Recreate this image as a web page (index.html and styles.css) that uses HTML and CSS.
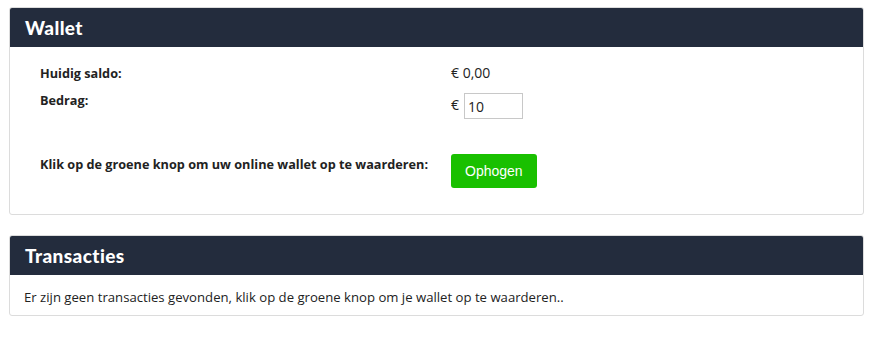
FILE: index.html
```html
<!DOCTYPE html>
<html lang="nl">
<head>
  <meta charset="UTF-8" />
  <title>Wallet</title>
  <link rel="stylesheet" href="styles.css">
</head>
<body>
  <section class="panel">
    <div class="panel-heading">
      <h2>Wallet</h2>
    </div>
    <div class="panel-body wallet">
      <div class="row">
        <div class="label">Huidig saldo:</div>
        <div class="value">&euro; 0,00</div>
      </div>
      <div class="row">
        <div class="label">Bedrag:</div>
        <div class="value">&euro; <input type="text" value="10"></div>
      </div>
      <div class="row row-button">
        <div class="label">Klik op de groene knop om uw online wallet op te waarderen:</div>
        <div class="value"><button class="btn-green">Ophogen</button></div>
      </div>
    </div>
  </section>

  <section class="panel">
    <div class="panel-heading">
      <h2>Transacties</h2>
    </div>
    <div class="panel-body">
      Er zijn geen transacties gevonden, klik op de groene knop om je wallet op te waarderen..
    </div>
  </section>
</body>
</html>
```

FILE: styles.css
```css
* {
  margin: 0;
  padding: 0;
  box-sizing: border-box;
}

body {
  background-color: #fff;
  color: #222;
  font-family: "Open Sans", "Liberation Sans", sans-serif;
  font-size: 13px;
  padding: 7px 16px 0 9px;
}

.panel {
  border: 1px solid #dcdcdc;
  border-radius: 3px;
  margin-bottom: 20px;
  overflow: hidden;
}

.panel-heading {
  background-color: #232c3d;
  color: #fff;
  height: 39px;
  padding: 0 15px;
  display: flex;
  align-items: center;
}

.panel-heading h2 {
  font-family: Lato, sans-serif;
  font-weight: 900;
  font-size: 19px;
  letter-spacing: 0.4px;
}

.panel-body {
  padding: 13px 14px 9px;
  font-size: 13.15px;
  color: #222;
}

.wallet {
  padding: 16px 30px 26px;
}

.row {
  display: grid;
  grid-template-columns: 411px 1fr;
  align-items: start;
  margin-bottom: 8px;
}

.row-button {
  margin-top: 35px;
  margin-bottom: 0;
}

.label {
  font-size: 12.7px;
  font-weight: 700;
  padding-top: 1px;
}

.value {
  font-size: 14px;
  display: flex;
  align-items: center;
  gap: 5px;
}

.value input {
  width: 59px;
  height: 26px;
  margin-top: 3px;
  border: 1px solid #c8c8c8;
  padding: 0 3px;
  font-size: 14px;
  font-family: inherit;
  color: #222;
}

.btn-green {
  background-color: #19c000;
  color: #fff;
  border: none;
  border-radius: 3px;
  height: 34px;
  padding: 0 14px;
  font-size: 14px;
  font-family: "Liberation Sans", sans-serif;
  cursor: pointer;
}
```
